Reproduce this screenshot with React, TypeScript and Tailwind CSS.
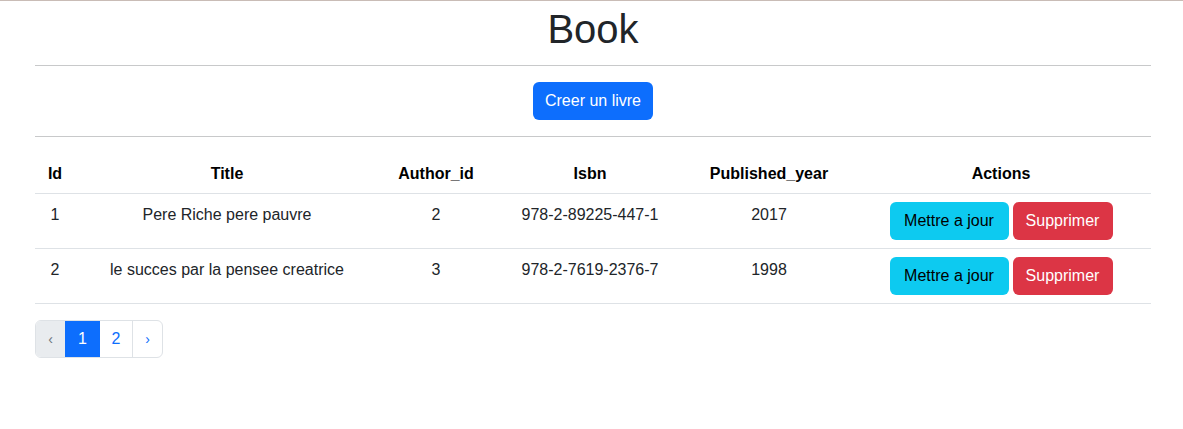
const books = [
  { id: 1, title: "Pere Riche pere pauvre", author: 2, isbn: "978-2-89225-447-1", year: 2017 },
  { id: 2, title: "le succes par la pensee creatrice", author: 3, isbn: "978-2-7619-2376-7", year: 1998 },
];

const cols = [
  { label: "Id", w: "w-[40px]" },
  { label: "Title", w: "w-[304px]" },
  { label: "Author_id", w: "w-[114px]" },
  { label: "Isbn", w: "w-[194px]" },
  { label: "Published_year", w: "w-[164px]" },
  { label: "Actions", w: "w-[300px]" },
];

const cell = "border-b border-[#dee2e6] px-2 pt-[9px] pb-[7px] text-center align-top leading-6";

export default function App() {
  return (
    <div className="min-h-[429px] bg-white text-[#212529] font-['Liberation_Sans',Arial,sans-serif] text-base">
      {/* top edge */}
      <div className="h-px bg-[#c9bcb6]" />

      <div className="ml-[35px] w-[1116px]">
        <h1 className="pt-[4px] text-center text-[40px] leading-[48px] font-medium">Book</h1>
        <hr className="mt-[12px] border-0 h-px bg-[#c8c9ca]" />

        <div className="flex justify-center py-4">
          <button className="h-[38px] w-[120px] rounded-md bg-[#0d6efd] text-white leading-6">
            Creer un livre
          </button>
        </div>
        <hr className="border-0 h-px bg-[#c8c9ca]" />

        {/* books table */}
        <table className="mt-4 w-full border-collapse table-fixed">
          <thead>
            <tr>
              {cols.map((c) => (
                <th
                  key={c.label}
                  className={`${c.w} border-b border-[#dee2e6] px-2 pt-[9px] pb-[7px] text-center font-bold leading-6 text-black`}
                >
                  {c.label}
                </th>
              ))}
            </tr>
          </thead>
          <tbody>
            {books.map((b) => (
              <tr key={b.id}>
                <td className={cell}>{b.id}</td>
                <td className={cell}>{b.title}</td>
                <td className={cell}>{b.author}</td>
                <td className={cell}>{b.isbn}</td>
                <td className={cell}>{b.year}</td>
                <td className="border-b border-[#dee2e6] p-2 align-top">
                  <div className="flex justify-center gap-1">
                    <button className="h-[38px] w-[119px] rounded-md bg-[#0dcaf0] text-black leading-6">
                      Mettre a jour
                    </button>
                    <button className="h-[38px] w-[100px] rounded-md bg-[#dc3545] text-white leading-6">
                      Supprimer
                    </button>
                  </div>
                </td>
              </tr>
            ))}
          </tbody>
        </table>

        {/* pagination */}
        <nav className="mt-4 flex">
          <div className="flex h-[38px] overflow-hidden rounded-md border border-[#dee2e6]">
            <span className="flex w-[29px] items-center justify-center bg-[#e9ecef] text-sm text-[#6c757d]">‹</span>
            <span className="flex w-[35px] items-center justify-center bg-[#0d6efd] text-white">1</span>
            <span className="flex w-[33px] items-center justify-center border-r border-[#dee2e6] text-[#0d6efd]">2</span>
            <span className="flex w-[29px] items-center justify-center text-sm text-[#0d6efd]">›</span>
          </div>
        </nav>
      </div>
    </div>
  );
}
